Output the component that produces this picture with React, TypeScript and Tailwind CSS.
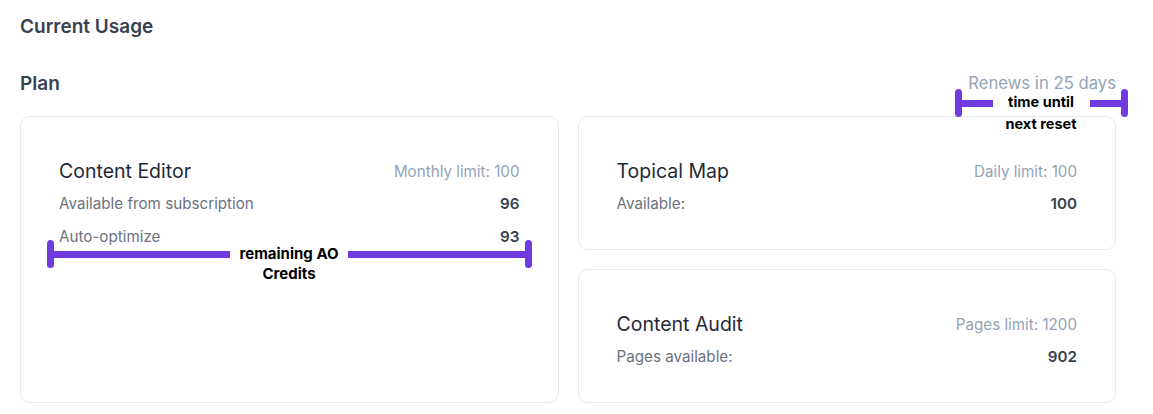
import React from 'react'

type Row = { label: string; value: string }

function UsageCard({ title, limit, rows, grow }: { title: string; limit: string; rows: Row[]; grow?: boolean }) {
  return (
    <div className={`rounded-[10px] border border-[#e5e9f0] bg-white px-[38px] pt-[41px] pb-[35px] ${grow ? 'h-full' : ''}`}>
      <div className="flex items-center justify-between h-7">
        <span className="text-[19.5px] text-[#1f2937]">{title}</span>
        <span className="text-[15.2px] text-[#94a3b8]">{limit}</span>
      </div>
      <div className="mt-[8px] flex flex-col gap-[13px]">
        {rows.map((row) => (
          <div key={row.label} className="flex items-center justify-between h-5 text-[15.2px]">
            <span className="text-[#6b7280]">{row.label}</span>
            <span className="font-semibold text-[#374151]">{row.value}</span>
          </div>
        ))}
      </div>
    </div>
  )
}

function Bracket({ className, left, right }: { className: string; left: string; right: string }) {
  // purple annotation bracket: caps at both ends, gap in the middle for the label
  return (
    <div className={`absolute flex items-center ${className}`}>
      <div className="w-[7px] h-[28px] rounded-full bg-[#6f3ade]" />
      <div className={`h-[7px] bg-[#6f3ade] ${left}`} />
      <div className="flex-1" />
      <div className={`h-[7px] bg-[#6f3ade] ${right}`} />
      <div className="w-[7px] h-[28px] rounded-full bg-[#6f3ade]" />
    </div>
  )
}

export default function App() {
  return (
    <div className="relative w-[1153px] h-[414px] bg-white overflow-hidden" style={{ fontFamily: 'Inter, "Noto Sans", sans-serif' }}>
      <div className="w-[1096px] ml-5 pt-[13px]">
        <h2 className="text-[19px] leading-7 font-semibold text-[#374151]">Current Usage</h2>
        <div className="mt-[29px] flex items-center justify-between h-7">
          <h3 className="text-[19px] font-semibold text-[#374151]">Plan</h3>
          <span className="text-[16.7px] text-[#94a3b8]">Renews in 25 days</span>
        </div>
        <div className="mt-[18px] grid grid-cols-2 gap-[19px]">
          <UsageCard
            grow
            title="Content Editor"
            limit="Monthly limit: 100"
            rows={[
              { label: 'Available from subscription', value: '96' },
              { label: 'Auto-optimize', value: '93' },
            ]}
          />
          <div className="flex flex-col gap-[19px]">
            <UsageCard title="Topical Map" limit="Daily limit: 100" rows={[{ label: 'Available:', value: '100' }]} />
            <UsageCard title="Content Audit" limit="Pages limit: 1200" rows={[{ label: 'Pages available:', value: '902' }]} />
          </div>
        </div>
      </div>

      <Bracket className="left-[47px] top-[240px] w-[485px]" left="w-[176px]" right="w-[177px]" />
      <div className="absolute left-[229px] top-[244px] w-[120px] text-center text-[15px] leading-[20px] font-bold text-black">
        remaining AO<br />Credits
      </div>

      <Bracket className="left-[955px] top-[89px] w-[173px]" left="w-[31px]" right="w-[31px]" />
      <div className="absolute left-[990px] top-[91px] w-[102px] text-center text-[14.5px] leading-[22px] font-bold text-black">
        time until<br />next reset
      </div>
    </div>
  )
}
